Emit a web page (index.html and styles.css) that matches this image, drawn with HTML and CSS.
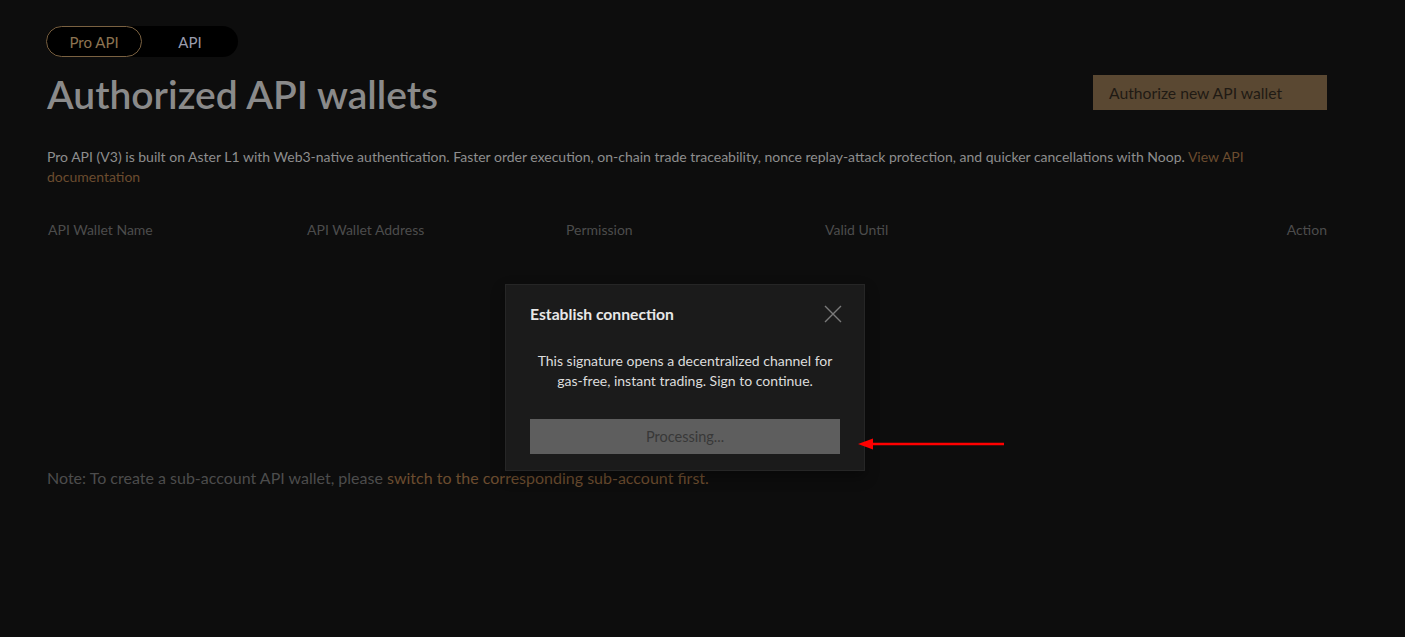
FILE: index.html
```html
<!DOCTYPE html>
<html lang="en">
<head>
    <meta charset="UTF-8">
    <title>Authorized API wallets</title>
    <link rel="stylesheet" href="styles.css">
</head>
<body>
    <div class="page">
        <div class="tabs">
            <span class="tab active">Pro API</span>
            <span class="tab">API</span>
        </div>
        <div class="title-row">
            <h1 class="title">Authorized API wallets</h1>
            <button class="auth-button">Authorize new API wallet</button>
        </div>
        <p class="desc">
            Pro API (V3) is built on Aster L1 with Web3-native authentication. Faster order execution, on-chain trade traceability, nonce replay-attack protection, and quicker cancellations with Noop. <a class="link" href="#">View API documentation</a>
        </p>
        <div class="table-head">
            <span>API Wallet Name</span>
            <span>API Wallet Address</span>
            <span>Permission</span>
            <span>Valid Until</span>
            <span class="right">Action</span>
        </div>
        <div class="empty"></div>
        <p class="note">Note: To create a sub-account API wallet, please <a class="link" href="#">switch to the corresponding sub-account first.</a></p>
    </div>

    <div class="modal">
        <div class="modal-head">
            <span class="modal-title">Establish connection</span>
            <svg class="close" width="18" height="18" viewBox="0 0 18 18">
                <path d="M1 1L17 17M17 1L1 17" stroke="#7a7a7a" stroke-width="1.4" fill="none"/>
            </svg>
        </div>
        <p class="modal-text">This signature opens a decentralized channel for gas-free, instant trading. Sign to continue.</p>
        <div class="processing">Processing...</div>
    </div>

    <svg class="arrow" width="150" height="14" viewBox="0 0 150 14">
        <path d="M146 7H14" stroke="#ff0000" stroke-width="2.5"/>
        <path d="M0 7L15 1.5V12.5Z" fill="#ff0000"/>
    </svg>
</body>
</html>
```

FILE: styles.css
```css
body {
    margin: 0;
    background-color: #0d0d0d;
    font-family: Lato, "Noto Sans", sans-serif;
    color: #8e8e8e;
    min-height: 100vh;
    position: relative;
}
.page {
    padding: 26px 78px 0 47px;
}
.tabs {
    display: inline-flex;
    background-color: #000;
    border-radius: 16px;
    width: 192px;
    height: 31px;
    margin-left: -1px;
}
.tab {
    display: flex;
    align-items: center;
    justify-content: center;
    font-size: 15px;
    color: #9a9cae;
    width: 96px;
    border-radius: 16px;
}
.tab.active {
    color: #8d7452;
    border: 1px solid #7a6141;
    box-sizing: border-box;
}
.title-row {
    display: flex;
    justify-content: space-between;
    align-items: flex-start;
    margin-top: 17px;
}
.title {
    margin: 0;
    font-size: 39px;
    font-weight: 600;
    color: #8a8a8a;
    line-height: 40px;
    letter-spacing: 0;
}
.auth-button {
    margin-top: 1px;
    width: 234px;
    height: 35px;
    background-color: #5a4832;
    border: none;
    color: #1f1a14;
    font-family: Lato, "Noto Sans", sans-serif;
    font-size: 15.7px;
    text-align: left;
    padding: 0 16px;
}
.desc {
    margin: 33px 0 0;
    font-size: 14px;
    line-height: 20px;
    color: #8e8e8e;
}
.link {
    color: #6b4c2f;
    text-decoration: none;
}
.table-head {
    display: grid;
    grid-template-columns: 259px 259px 259px 259px 1fr;
    margin-top: 34px;
    font-size: 14px;
    color: #4c4c4c;
    padding-left: 1px;
}
.right {
    text-align: right;
}
.empty {
    height: 230px;
}
.note {
    margin: 0;
    font-size: 16px;
    color: #4c4c4c;
}
.modal {
    position: absolute;
    left: 505px;
    top: 284px;
    width: 360px;
    box-sizing: border-box;
    padding: 20px 24px 16px;
    background-color: #1b1b1b;
    border: 1px solid #262626;
    box-shadow: 0 6px 12px rgba(0, 0, 0, 0.35);
}
.modal-head {
    display: flex;
    justify-content: space-between;
    align-items: center;
}
.modal-title {
    font-size: 15.7px;
    font-weight: 700;
    color: #e8e8e8;
}
.close {
    margin-right: -2px;
}
.modal-text {
    margin: 28px 0 28px;
    text-align: center;
    font-size: 14px;
    line-height: 20px;
    color: #dddddd;
}
.processing {
    height: 35px;
    display: flex;
    align-items: center;
    justify-content: center;
    background-color: #5e5e5e;
    color: #383838;
    font-size: 14.5px;
}
.arrow {
    position: absolute;
    left: 858px;
    top: 437px;
}
```
